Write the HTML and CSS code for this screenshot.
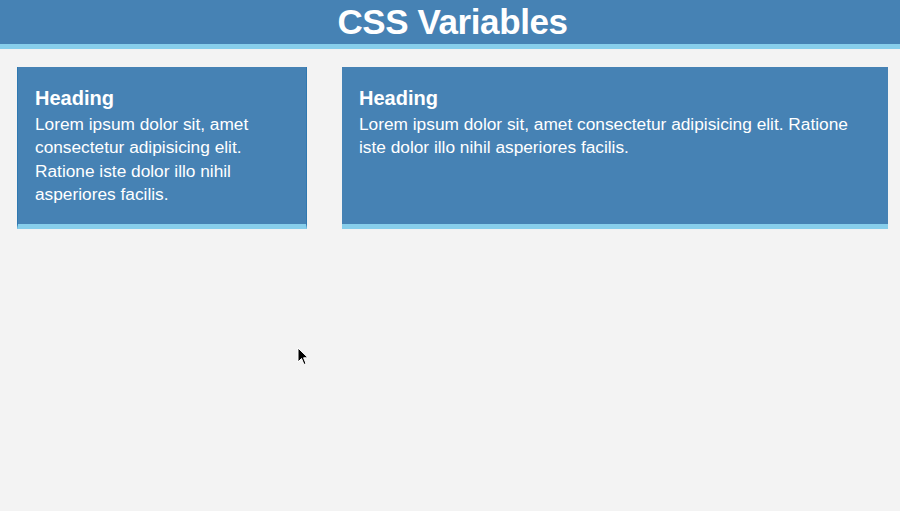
FILE: index.html
```html
<!DOCTYPE html>
<html>
<head>
<meta charset="utf-8">
<link rel="stylesheet" href="styles.css">
</head>
<body>
<header class="top">
  <h1 class="title">CSS Variables</h1>
</header>
<main class="grid">
  <section class="box">
    <h3 class="box-title">Heading</h3>
    <p class="box-text">Lorem ipsum dolor sit, amet consectetur adipisicing elit. Ratione iste dolor illo nihil asperiores facilis.</p>
  </section>
  <section class="box">
    <h3 class="box-title">Heading</h3>
    <p class="box-text">Lorem ipsum dolor sit, amet consectetur adipisicing elit. Ratione iste dolor illo nihil asperiores facilis.</p>
  </section>
</main>
<svg class="cursor" width="12" height="19" viewBox="0 0 12 19">
  <path d="M1 1 L1 15 L4.5 11.5 L7 17.5 L9 16.6 L6.6 10.8 L11 10.8 Z" fill="#000" stroke="#fff" stroke-width="1"/>
</svg>
</body>
</html>
```
FILE: styles.css
```css
html, body {
  margin: 0;
  padding: 0;
}
body {
  background: #f3f3f3;
  font-family: "Liberation Sans", Arial, sans-serif;
  color: #fff;
  height: 511px;
  position: relative;
  overflow: hidden;
}
.top {
  background: #4682b4;
  border-bottom: 5px solid #87ceeb;
  height: 44px;
  display: flex;
  align-items: center;
  justify-content: center;
}
.title {
  margin: 0;
  font-size: 35px;
  font-weight: bold;
  line-height: 44px;
  padding-left: 5px;
  letter-spacing: -0.4px;
}
.grid {
  display: grid;
  grid-template-columns: 290px 546px;
  column-gap: 35px;
  padding: 18px 0 0 17px;
}
.box {
  background: #4682b4;
  border-bottom: 5px solid #87ceeb;
  padding: 17px 17px 0 17px;
  box-sizing: border-box;
  height: 162px;
}
.box:first-child {
  border-left: 1px solid #2f78b0;
  border-right: 1px solid #2f78b0;
}
.box-title {
  margin: 0;
  font-size: 20px;
  font-weight: bold;
  line-height: 28px;
}
.box-text {
  margin: 0;
  padding-top: 1px;
  font-size: 17.3px;
  line-height: 23.4px;
}
.cursor {
  position: absolute;
  left: 297px;
  top: 347px;
}
```
